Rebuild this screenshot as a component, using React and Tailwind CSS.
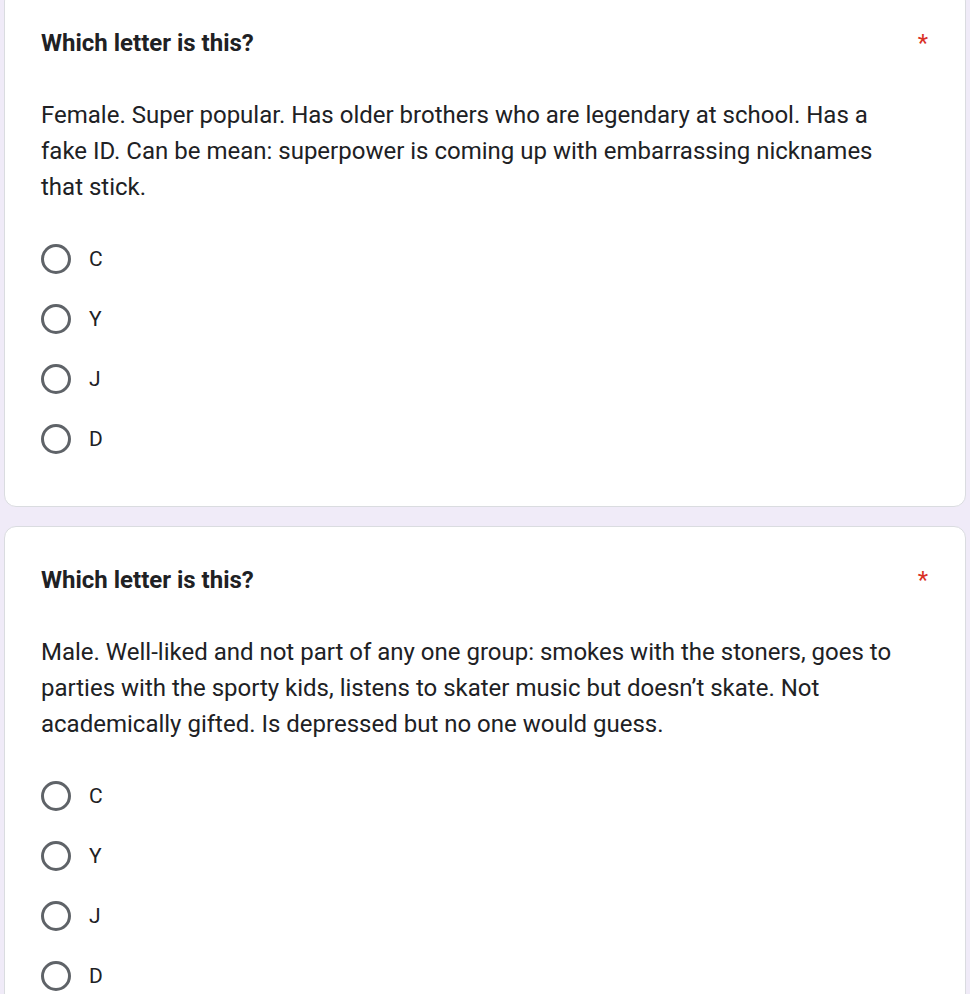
import React from "react";

function Radio({ label }) {
  return (
    <div className="flex items-center h-[60px]">
      <div className="w-[30px] h-[30px] rounded-full border-[3px] border-[#5f6368] shrink-0" />
      <span className="ml-[18px] text-[21px] text-[#202124] leading-none">{label}</span>
    </div>
  );
}

function Card({ text, first }) {
  return (
    <div
      className={
        "bg-white border border-[#dadce0] rounded-[12px] px-[36px] pt-[35px] pb-[37px] " +
        (first ? "-mt-[11px]" : "")
      }
    >
      <div className="flex items-start justify-between">
        <div className="text-[24px] font-bold text-[#202124] leading-[36px]">Which letter is this?</div>
        <div className="text-[24px] text-[#d93025] leading-[36px] mr-[1px]">*</div>
      </div>
      <div className="mt-[36px] w-[860px] text-[24px] text-[#202124] leading-[36px]">{text}</div>
      <div className="mt-[24px] flex flex-col">
        <Radio label="C" />
        <Radio label="Y" />
        <Radio label="J" />
        <Radio label="D" />
      </div>
    </div>
  );
}

export default function App() {
  return (
    <div
      className="min-h-screen bg-[#f0ebf8] px-[4px] overflow-hidden"
      style={{ fontFamily: "Roboto, 'Liberation Sans', sans-serif" }}
    >
      <div className="w-[962px] flex flex-col gap-[19px]">
        <Card
          first
          text="Female. Super popular. Has older brothers who are legendary at school. Has a fake ID. Can be mean: superpower is coming up with embarrassing nicknames that stick."
        />
        <Card text="Male. Well-liked and not part of any one group: smokes with the stoners, goes to parties with the sporty kids, listens to skater music but doesn’t skate. Not academically gifted. Is depressed but no one would guess." />
      </div>
    </div>
  );
}
